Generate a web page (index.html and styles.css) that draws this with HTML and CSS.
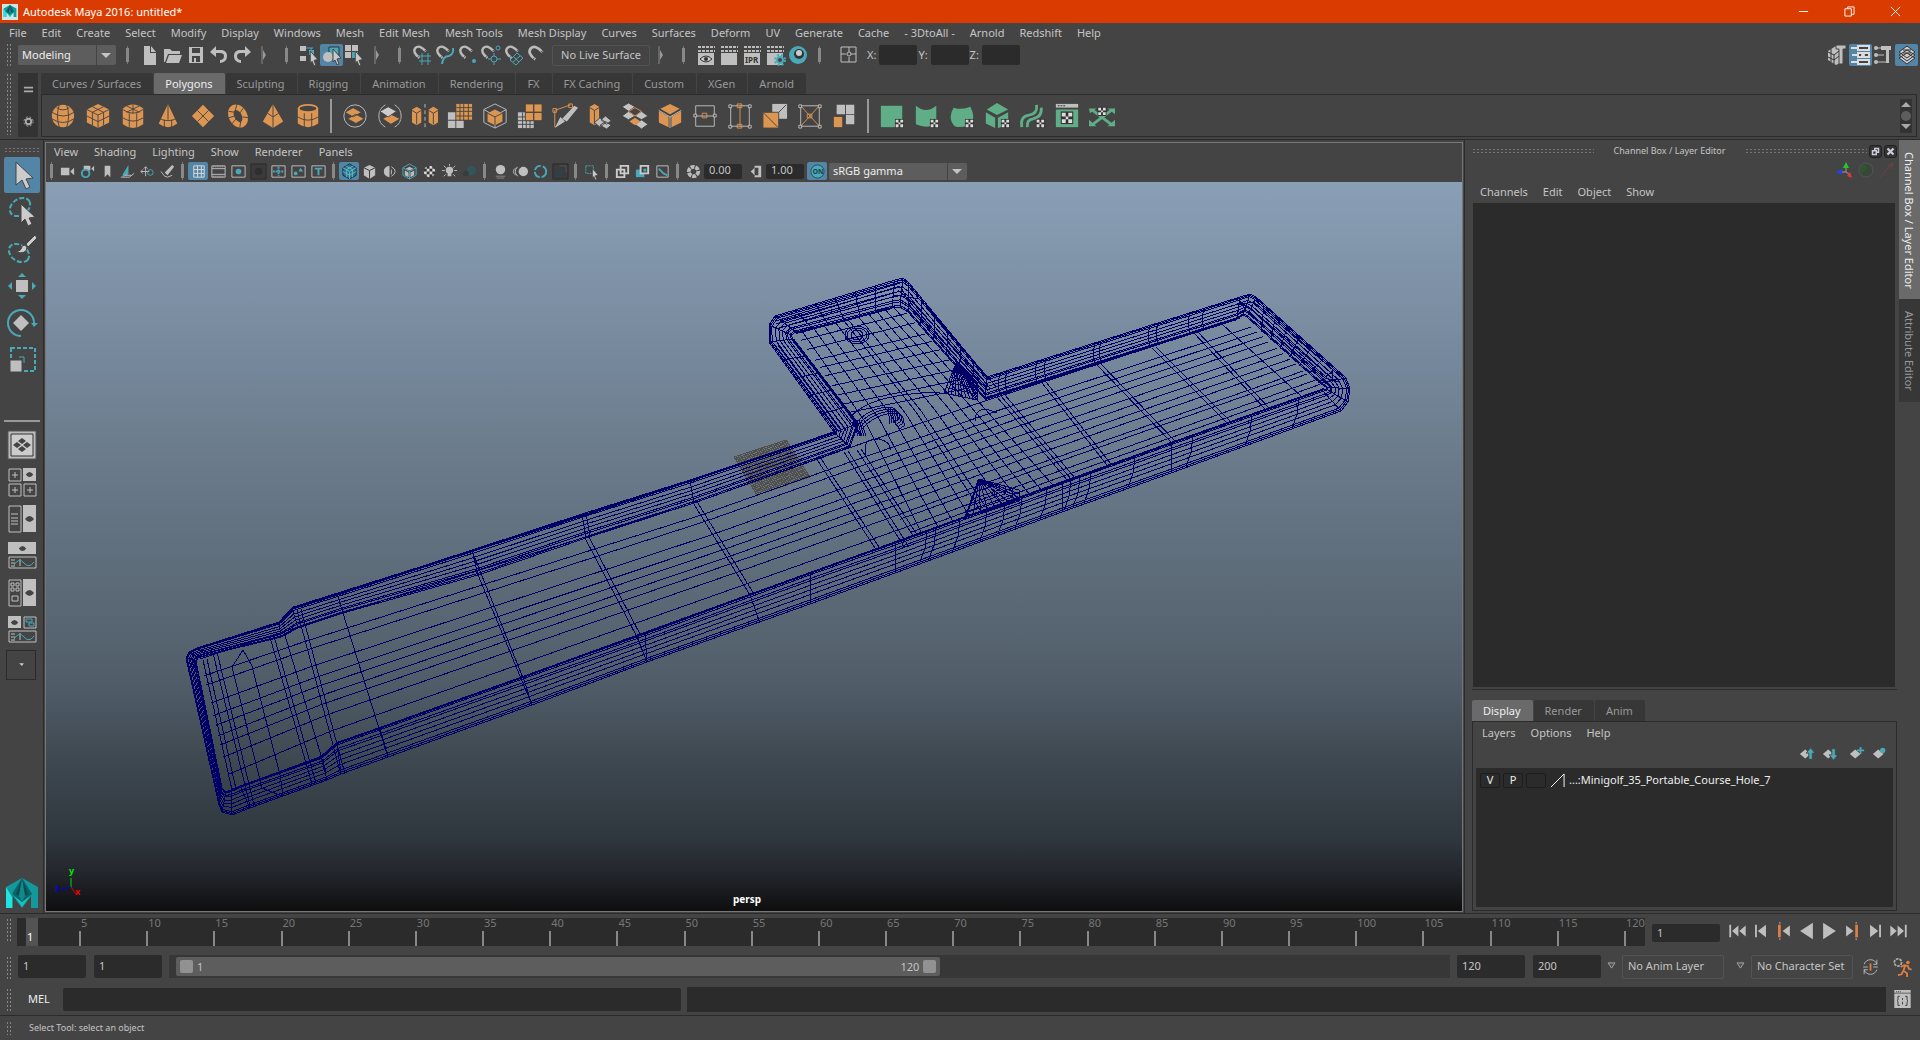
FILE: index.html
```html
<!DOCTYPE html>
<html lang="en">
<head>
<meta charset="utf-8">
<title>Autodesk Maya 2016: untitled*</title>
<link rel="stylesheet" href="styles.css">
</head>
<body>
<svg class="sprite" aria-hidden="true">
  <defs>
    <pattern id="check" width="6" height="6" patternUnits="userSpaceOnUse"><rect width="6" height="6" fill="#333"/><path d="M0 0h3v3h-3zM3 3h3v3h-3z" fill="#ddd"/></pattern>
  </defs>
  <!-- status line, 22 x 22 -->
  <symbol id="new" viewBox="0 0 22 22"><path class="l" d="M5 2h6v7h6v12H5z"/><path class="l" d="M12 2l5 6h-5z"/></symbol>
  <symbol id="open" viewBox="0 0 22 22"><path class="l" d="M2 5h6l2 2h8v3H6l-3 8H2z"/><path class="l" d="M7 11h13l-3 8H4z"/></symbol>
  <symbol id="save" viewBox="0 0 22 22"><path class="l" fill-rule="evenodd" d="M4 3h14v16H4zM7 4v5h8V4zM7 12v6h8v-6zM9 14h2v4H9z"/></symbol>
  <symbol id="undo" viewBox="0 0 22 22"><path class="l" d="M2 8l6-6v4h6q5 1 5 6 0 6-7 7v-3q4 0 4-4 0-3-4-3H8v4z"/></symbol>
  <symbol id="redo" viewBox="0 0 22 22"><path class="l" d="M20 8l-6-6v4H8q-5 1-5 6 0 6 7 7v-3q-4 0-4-4 0-3 4-3h4v4z"/></symbol>
  <symbol id="fold" viewBox="0 0 22 22"><path d="M8 2v18" stroke="#888"/><path fill="#999" d="M9 6l3 5-3 5z"/></symbol>
  <symbol id="cursor" viewBox="0 0 10 16"><path d="M1 0l8 9-4 1 2 5-2 1-2-5-2 2z" fill="#c8c8c8" stroke="#444"/></symbol>
  <symbol id="selh" viewBox="0 0 22 22"><path class="l" d="M2 2h6v5H2zM2 12h6v5H2z"/><path class="t" d="M8 4h7M13 4v5"/><path fill="#49a9b9" d="M11 6h5v5h-5z"/><use href="#cursor" x="11" y="7" width="10" height="15"/></symbol>
  <symbol id="selo" viewBox="0 0 22 22"><path fill="#49a9b9" stroke="#333" d="M8 3h10v9H8z"/><circle class="l" cx="7" cy="13" r="5"/><use href="#cursor" x="11" y="5" width="10" height="16"/></symbol>
  <symbol id="selc" viewBox="0 0 22 22"><path class="l" d="M1 1h6v6H1zM8 1h6v6H8zM1 8h6v6H1z"/><path fill="#49a9b9" d="M8 8h6v6H8z"/><use href="#cursor" x="10" y="7" width="10" height="15"/></symbol>
  <symbol id="mag" viewBox="0 0 22 22"><path d="M9 17Q0 10 4 5q5-5 13 4" fill="none" stroke="#bbb" stroke-width="3"/><path d="M8 15l-2 3M15 9l3-2" stroke="#444"/></symbol>
  <symbol id="m1" viewBox="0 0 22 22"><use href="#mag" width="20" height="18"/><path class="t" d="M8 12h12M8 17h12M11 9v12M17 9v12"/></symbol>
  <symbol id="m2" viewBox="0 0 22 22"><use href="#mag" width="20" height="18"/><path class="t" stroke-width="2" d="M8 20q1-8 7-8 5-2 4-8"/></symbol>
  <symbol id="m3" viewBox="0 0 22 22"><use href="#mag" width="20" height="18"/><circle cx="17" cy="17" r="2" fill="#49a9b9"/></symbol>
  <symbol id="m4" viewBox="0 0 22 22"><use href="#mag" width="18" height="18"/><circle class="t" cx="18" cy="4" r="2"/><circle class="t" cx="14" cy="15" r="3"/><path class="t" d="M14 9v3M14 18v3M8 15h3M17 15h4"/></symbol>
  <symbol id="m5" viewBox="0 0 22 22"><use href="#mag" width="20" height="18"/><path class="t" d="M14 9l6 5-7 7-6-5zM17 12l-7 6M11 13l5 5"/></symbol>
  <symbol id="m6" viewBox="0 0 22 22"><use href="#mag" x="1" width="20" height="20"/></symbol>
  <symbol id="clap" viewBox="0 0 22 22"><path class="l" d="M3 9h16v12H3z"/><path d="M3 3h17M3 7h17" stroke="#bbb" stroke-width="2" stroke-dasharray="3 1"/></symbol>
  <symbol id="r1" viewBox="0 0 22 22"><use href="#clap" width="22" height="22"/><path d="M5 15q6-6 12 0-6 6-12 0z" fill="#ccc" stroke="#333"/><circle cx="11" cy="15" r="2" fill="#333"/></symbol>
  <symbol id="r4" viewBox="0 0 22 22"><use href="#clap" width="22" height="22"/><circle cx="16" cy="16" r="3" fill="#444" stroke="#49a9b9" stroke-width="2"/><circle cx="16" cy="16" r="5" fill="none" stroke="#49a9b9" stroke-width="2" stroke-dasharray="2 2"/></symbol>
  <symbol id="r5" viewBox="0 0 22 22"><circle cx="11" cy="11" r="9" fill="#49a9b9"/><circle cx="12" cy="10" r="5" fill="#333"/><circle cx="12" cy="9" r="3" fill="#ccc"/></symbol>
  <symbol id="xyz" viewBox="0 0 22 22"><path class="o" d="M3 3h15v15H3zM3 10h5M13 10h5M11 3v5M11 13v5"/><circle class="o" cx="11" cy="10" r="2"/></symbol>
  <symbol id="p1" viewBox="0 0 22 22"><path class="l" d="M1 7l8-5 4 2v15l-4 2-8-5z"/><path class="d" d="M1 8l6 3v9M7 11l5-4M1 13l6 3 5-4M4 5v13"/><path class="l" stroke="#444" d="M9 1h10v4h-3v15h-4V5H9z"/></symbol>
  <symbol id="p2" viewBox="0 0 22 22"><path d="M1 4h7M2 11h7M1 18h7" stroke="#ddd" stroke-width="2"/><path fill="#444" stroke="#ddd" stroke-width="2" d="M8 2h11v4H8zM8 9h11v4H8zM8 16h11v4H8z"/><circle cx="13" cy="11" r="2" fill="#ddd"/></symbol>
  <symbol id="p3" viewBox="0 0 22 22"><path class="l" d="M8 2h10v4h-2v13h-3V6H8z"/><path class="o" d="M3 4h5M3 11h8M3 18h11"/><circle class="l" cx="3" cy="4" r="2"/><circle class="l" cx="3" cy="11" r="2"/><circle class="l" cx="3" cy="18" r="2"/></symbol>
  <symbol id="p4" viewBox="0 0 22 22"><path fill="#ccc" stroke="#333" d="M11 9l8 5-8 6-8-6zM11 6l8 5-8 6-8-6zM11 2l8 6-8 6-8-6z"/><path class="d" d="M7 6h8M7 9h8"/></symbol>

  <!-- shelf, 28 x 28 -->
  <symbol id="s1" viewBox="0 0 28 28"><circle class="g" cx="14" cy="14" r="12"/><path class="c" d="M2 10q12 8 24 0M2 17q12 8 24 0M10 2q-4 12 0 24M18 2q4 12 0 24M7 5q7 5 14 0"/></symbol>
  <symbol id="s2" viewBox="0 0 28 28"><path class="g" d="M14 1l12 6v14l-12 6L2 21V7z"/><path class="c" d="M2 7l12 6 12-6M14 13v14M8 4l12 6v14M20 4L8 10v14M2 14l12 6 12-6"/></symbol>
  <symbol id="s3" viewBox="0 0 28 28"><path class="g" d="M3 6q11-9 22 0v17q-11 8-22 0z"/><path class="c" d="M3 7q11 8 22 0M3 16q11 7 22 0M10 11v15M18 11v15M7 3l14 7M21 3L7 10M14 2v9"/></symbol>
  <symbol id="s4" viewBox="0 0 28 28"><path class="g" d="M14 1l10 21q-10 8-20 0z"/><path class="c" d="M14 1v17M5 17q9 4 18 0M10 18v8M18 18v8"/></symbol>
  <symbol id="s5" viewBox="0 0 28 28"><path class="g" d="M14 2l12 12-12 12L2 14z"/><path class="c" d="M8 8l12 12M20 8L8 20"/></symbol>
  <symbol id="s6" viewBox="0 0 28 28"><ellipse cx="14" cy="14" rx="7" ry="10" transform="rotate(-28 14 14)" fill="none" stroke="#dd9552" stroke-width="6"/><path class="c" d="M4 9l7 1M13 1l-2 7M20 5l-4 6M26 16l-7-1M16 26l1-7M7 23l5-6M4 16l6-2"/></symbol>
  <symbol id="s7" viewBox="0 0 28 28"><path class="g" d="M14 1l11 19-11 7-11-7z"/><path class="c" d="M14 1v26M8 11l6 4 6-4"/></symbol>
  <symbol id="s8" viewBox="0 0 28 28"><path class="g" d="M3 5v17q11 8 22 0V5z"/><ellipse cx="14" cy="6" rx="10" ry="4" fill="#444" stroke="#dd9552" stroke-width="2"/><path class="c" d="M3 15q11 7 22 0M10 11v15M18 11v15"/></symbol>
  <symbol id="s9" viewBox="0 0 28 28"><circle class="o" cx="14" cy="14" r="12"/><path class="g" stroke="#444" d="M15 12l9 5-9 5-9-5zM12 5l9 5-9 5-9-5z"/></symbol>
  <symbol id="s10" viewBox="0 0 28 28"><path class="o" d="M9 2Q2 6 2 14t7 12M19 2q7 4 7 12t-7 12"/><path class="g" stroke="#444" d="M15 12l10 5-10 6-9-6z"/><path fill="#ccc" stroke="#444" d="M12 4l9 5-9 6-9-6z"/></symbol>
  <symbol id="s11" viewBox="0 0 28 28"><path class="g" d="M0 7l5-3 5 3v14l-5 3-5-3zM18 7l5-3 5 3v14l-5 3-5-3z"/><path class="c" d="M0 8l5 3v12M5 11l5-3M18 8l5 3v12M23 11l5-3"/><path class="o" stroke-dasharray="4 3" d="M14 1v27"/></symbol>
  <symbol id="s12" viewBox="0 0 28 28"><path class="l" d="M1 10h8v8H1zM1 19h8v8H1zM10 19h8v8h-8z"/><path class="g" d="M10 1h17v17H10z"/><path class="c" d="M10 5h18M10 9h18M10 14h18M14 1v18M18 1v18M23 1v18"/></symbol>
  <symbol id="s13" viewBox="0 0 28 28"><path class="o" d="M14 1l12 6v14l-12 6L2 21V7zM2 7l12 7 12-7M14 14v13"/><path class="g" d="M14 7l8 4v9l-8 4-8-4v-9z"/><path class="c" d="M6 11l8 4 8-4M14 15v9"/></symbol>
  <symbol id="s14" viewBox="0 0 28 28"><path class="l" d="M1 10h17v17H1z"/><path class="c" d="M1 15h17M1 19h17M1 23h17M6 10v17M10 10v17M14 10v17"/><path class="g" stroke="#444" d="M9 1h9v9H9zM18 1h9v9h-9zM18 10h9v9h-9zM9 10h9v9H9z"/></symbol>
  <symbol id="s15" viewBox="0 0 28 28"><path d="M3 26V8l17-6" class="go"/><path fill="#444" class="go" d="M1 6h4v4H1zM18 1h4v4h-4z"/><path d="M3 27l6-12 5 5zM11 17L24 3l4 2-12 15z" class="l"/></symbol>
  <symbol id="s16" viewBox="0 0 28 28"><path class="g" d="M3 4l5-3 5 3v17l-5 3-5-3z"/><path class="c" d="M3 5l5 3v15M8 8l5-3"/><path class="l" stroke="#444" d="M14 16l6 5-6 5-6-5zM20 20l6 4-5 4-7-4zM20 14l6 5-5 4-6-5z"/></symbol>
  <symbol id="s17" viewBox="0 0 28 28"><path fill="#c4c4c4" stroke="#444" d="M7 0l7 4-7 5-7-5zM21 9l7 5-7 4-7-4zM21 18l7 5-7 5-7-5zM7 9l7 5-7 4-7-4z"/><path class="go" fill="#444" d="M14 5l7 4-7 5-7-5z"/><path class="g" d="M14 16l6 4-6 4-6-4z"/></symbol>
  <symbol id="s18" viewBox="0 0 28 28"><path class="g" d="M14 1l12 6v14l-12 6L2 21V7z"/><path d="M2 7l12 7 12-7M14 14v13" fill="none" stroke="#444" stroke-width="3"/><path class="o" d="M2 8l12 7 12-7M14 15v12"/></symbol>
  <symbol id="s19" viewBox="0 0 28 28"><path class="o" d="M4 3h20v22H4zM2 14h24"/><path class="oo" d="M2 12h3v3H2zM23 12h3v3h-3z"/><path class="go" fill="#444" d="M11 11h5v5h-5z"/></symbol>
  <symbol id="s20" viewBox="0 0 28 28"><path class="o" d="M4 3h20v22H4z"/><path class="oo" d="M2 2h3v3H2zM23 2h3v3h-3zM2 24h3v3H2zM23 24h3v3h-3z"/><path class="go" d="M14 3v22"/><path class="go" fill="#444" d="M11 1h5v4h-5zM11 23h5v4h-5z"/></symbol>
  <symbol id="s21" viewBox="0 0 28 28"><path class="l" d="M11 1h16v16H11z"/><path class="c" d="M13 15L26 2"/><path class="g" stroke="#444" d="M1 10h17v17H1z"/><path class="c" d="M2 11l15 15"/></symbol>
  <symbol id="s22" viewBox="0 0 28 28"><path class="o" d="M4 3h20v22H4z"/><path class="go" d="M4 3l20 22M24 3L4 25"/><path class="oo" d="M2 2h3v3H2zM23 2h3v3h-3zM2 24h3v3H2zM23 24h3v3h-3z"/><path class="go" fill="#444" d="M11 12h5v4h-5z"/></symbol>
  <symbol id="s23" viewBox="0 0 28 28"><path class="l" d="M5 2h9v10H5zM15 2h9v10h-9zM15 13h9v10h-9z"/><path class="g" d="M2 15h9v11H2z"/></symbol>
  <symbol id="ck" viewBox="0 0 10 10"><path d="M0 0h10v10H0z" fill="#333"/><path d="M1 1h3v3H1zM6 1h3v3H6zM4 4h2v2H4zM1 6h3v3H1zM6 6h3v3H6z" fill="#ddd"/></symbol>
  <symbol id="u1" viewBox="0 0 28 28"><path class="u" d="M2 3h23v23H2z"/><use href="#ck" x="17" y="17" width="10" height="10"/></symbol>
  <symbol id="u2" viewBox="0 0 28 28"><path class="u" d="M2 3q11 9 22 0v18q-8 8-22 2z"/><use href="#ck" x="17" y="17" width="10" height="10"/></symbol>
  <symbol id="u3" viewBox="0 0 28 28"><path class="u" d="M5 5q9 3 18-1 5 9 2 17-8 7-19 4Q-2 16 5 5z"/><use href="#ck" x="17" y="17" width="10" height="10"/></symbol>
  <symbol id="u4" viewBox="0 0 28 28"><path class="u" d="M14 0l12 7-12 6L3 7zM2 10l10 6v11L2 22zM15 16l11-6v14l-11 3z"/><use href="#ck" x="18" y="17" width="10" height="10"/></symbol>
  <symbol id="u5" viewBox="0 0 28 28"><path d="M3 26q-2-12 8-13 9-1 8-11M9 26q-1-8 6-9 10-2 9-12" fill="none" stroke="#5fae88" stroke-width="3"/><use href="#ck" x="18" y="17" width="10" height="10"/></symbol>
  <symbol id="u6" viewBox="0 0 28 28"><path class="l" d="M2 1h24v4H2z"/><path class="d" d="M4 3h8" stroke-dasharray="2 1"/><path class="u" d="M2 7h24v19H2z"/><use href="#ck" x="7" y="9" width="14" height="14"/></symbol>
  <symbol id="u7" viewBox="0 0 28 28"><path d="M4 8l20 15M24 8L4 23" stroke="#5fae88" stroke-width="3"/><path class="u" d="M0 6h8l-7 5zM20 6h8v6zM0 25v-7l8 7zM28 25v-7l-8 7z"/><use href="#ck" x="9" y="4" width="10" height="10"/></symbol>

  <!-- panel bar, 18 x 18 -->
  <symbol id="v1" viewBox="0 0 18 18"><path class="l" d="M2 5h9v8H2zM12 9l4-4v8z"/></symbol>
  <symbol id="v2" viewBox="0 0 18 18"><path class="l" d="M5 3h7v5H5zM13 6l3-3v6z"/><circle cx="7" cy="11" r="4" fill="#444" stroke="#49a9b9" stroke-width="2"/></symbol>
  <symbol id="v3" viewBox="0 0 18 18"><path class="l" d="M6 3h6v12l-3-3-3 3z"/></symbol>
  <symbol id="v4" viewBox="0 0 18 18"><path fill="#49a9b9" d="M4 12l6-10v10l-6 3z"/><path class="o" d="M2 15h9l5-4M6 13h7"/></symbol>
  <symbol id="v5" viewBox="0 0 18 18"><path class="o" d="M2 9h9M7 4v10M2 9l2-2M2 9l2 2M7 4l-2 2M7 4l2 2"/><circle class="t" cx="12" cy="10" r="3"/></symbol>
  <symbol id="v6" viewBox="0 0 18 18"><path class="l" d="M6 10L14 2l2 2-7 9z"/><path class="o" d="M2 9l4 5 3 1 5-2"/></symbol>
  <symbol id="v7" viewBox="0 0 18 18"><path d="M4 3h11v12H4zM4 7h11M4 11h11M8 3v12M12 3v12" fill="none" stroke="#ddd"/></symbol>
  <symbol id="v8" viewBox="0 0 18 18"><path class="o" d="M2 3h14v12H2zM2 6h14M2 12h14"/><path d="M3 4h12M3 14h12" stroke="#ccc" stroke-dasharray="1 1"/></symbol>
  <symbol id="v9" viewBox="0 0 18 18"><path class="o" d="M2 3h14v12H2z"/><circle cx="9" cy="9" r="3" fill="#49a9b9"/></symbol>
  <symbol id="v10" viewBox="0 0 18 18"><path d="M1 1h16v16H1z" fill="#3b3b3b" stroke="#2b2b2b"/><circle cx="9" cy="9" r="4" fill="#2f2f2f"/></symbol>
  <symbol id="v11" viewBox="0 0 18 18"><path class="o" d="M2 3h14v12H2z"/><path class="t" stroke-width="2" d="M3 9h12M9 4v10" stroke-dasharray="2 1"/></symbol>
  <symbol id="v12" viewBox="0 0 18 18"><path class="o" d="M2 3h14v12H2z"/><circle cx="6" cy="11" r="2" fill="#49a9b9"/><path fill="#49a9b9" d="M9 9l2-4 3 4z"/></symbol>
  <symbol id="v13" viewBox="0 0 18 18"><path class="o" d="M2 3h14v12H2z"/><path class="t" stroke-width="2" d="M5 6h8M9 6v7"/></symbol>
  <symbol id="v14" viewBox="0 0 18 18"><path fill="#326f86" stroke="#12323e" d="M9 1l7 4v8l-7 4-7-4V5z"/><path fill="none" stroke="#5cc0cf" d="M2 5l7 4 7-4M9 9v8M5 3l7 4v8M13 3L6 7v8M2 9l7 4 7-4"/></symbol>
  <symbol id="v15" viewBox="0 0 18 18"><path class="l" d="M9 2l6 3v8l-6 4-6-4V5z"/><path class="d" d="M3 5l6 3 6-3M9 8v9"/></symbol>
  <symbol id="v16" viewBox="0 0 18 18"><path class="l" d="M9 3v12q-6-1-6-6t6-6z"/><path class="o" d="M11 4q4 2 4 5t-4 5M11 7v5"/></symbol>
  <symbol id="v17" viewBox="0 0 18 18"><path class="t" d="M9 1l7 4v8l-7 4-7-4V5zM2 5l7 4 7-4M9 9v8"/><path d="M9 4l4 2-4 2-4-2zM4 8l4 2v5l-4-2zM14 8l-4 2v5l4-2z" fill="#bbb"/></symbol>
  <symbol id="v18" viewBox="0 0 18 18"><circle cx="9" cy="9" r="6" fill="url(#check)"/></symbol>
  <symbol id="v19" viewBox="0 0 18 18"><path class="l" d="M9 4q4 0 4 4 0 2-2 3v3H7v-3q-2-1-2-3 0-4 4-4z"/><path class="o" d="M9 1v2M1 8h3M14 8h3M3 3l2 2M15 3l-2 2M3 14l2-2M15 14l-2-2"/></symbol>
  <symbol id="v20" viewBox="0 0 18 18"><circle cx="11" cy="8" r="5" fill="#31555b"/><circle cx="5" cy="11" r="3" fill="#3b3b3b"/></symbol>
  <symbol id="v21" viewBox="0 0 18 18"><circle class="l" cx="9" cy="7" r="5"/><path d="M4 14h10M5 16h8" stroke="#888"/></symbol>
  <symbol id="v22" viewBox="0 0 18 18"><circle class="l" cx="12" cy="9" r="5"/><path class="o" d="M6 4Q1 9 6 14M4 5Q-1 9 4 13"/></symbol>
  <symbol id="v23" viewBox="0 0 18 18"><circle cx="9" cy="9" r="6" fill="none" stroke="#49a9b9" stroke-width="2" stroke-dasharray="8 2"/></symbol>
  <symbol id="v24" viewBox="0 0 18 18"><path d="M1 1h16v16H1z" fill="#3b3b3b" stroke="#2b2b2b"/><path d="M4 7h8v8H4z" fill="#2f4145"/><path d="M8 3h7v7" fill="none" stroke="#555"/></symbol>
  <symbol id="v25" viewBox="0 0 18 18"><path class="t" stroke-dasharray="2 1" d="M3 3h8v8H3z"/><use href="#cursor" x="9" y="6" width="8" height="12"/></symbol>
  <symbol id="v26" viewBox="0 0 18 18"><path fill="#444" stroke="#ccc" stroke-width="2" d="M7 3h8v8H7zM3 7h8v8H3z"/></symbol>
  <symbol id="v27" viewBox="0 0 18 18"><path fill="#49a9b9" d="M2 7h9v8H2z"/><path fill="#444" stroke="#ccc" stroke-width="2" d="M7 3h8v8H7z"/><path fill="#49a9b9" d="M10 6h3v3h-3z"/></symbol>
  <symbol id="v28" viewBox="0 0 18 18"><path class="o" d="M3 3h12v12H3z"/><path class="t" stroke-width="2" d="M5 6l5 5 4 2"/></symbol>
  <symbol id="v29" viewBox="0 0 18 18"><circle cx="9" cy="9" r="5" fill="none" stroke="#bbb" stroke-width="4" stroke-dasharray="4 1"/></symbol>
  <symbol id="v30" viewBox="0 0 18 18"><path class="l" d="M8 3h7v12H8v-2h4V5H8z"/><path class="l" d="M4 9l4-4v8z"/></symbol>

  <!-- toolbox, 36 x 34 -->
  <symbol id="t1" viewBox="0 0 36 34"><path fill="#ccc" stroke="#444" d="M12 4l17 16-7 1 4 8-4 2-4-9-6 5z"/></symbol>
  <symbol id="t2" viewBox="0 0 36 34"><ellipse cx="16" cy="12" rx="11" ry="8" transform="rotate(-35 16 12)" fill="none" stroke="#49a9b9" stroke-width="2" stroke-dasharray="5 2"/><path fill="#ccc" stroke="#444" d="M17 9l14 13-6 1 3 6-4 2-3-7-4 4z"/></symbol>
  <symbol id="t3" viewBox="0 0 36 34"><ellipse cx="15" cy="21" rx="11" ry="8" transform="rotate(35 15 21)" fill="none" stroke="#49a9b9" stroke-width="2" stroke-dasharray="5 2"/><path fill="#ccc" stroke="#444" d="M11 20q7-1 7-6 3-2 5 1 0 8-12 5zM22 12L31 3l2 3-9 9z"/></symbol>
  <symbol id="t4" viewBox="0 0 36 34"><path class="l" d="M12 11h12v12H12z"/><path fill="#49a9b9" d="M14 8l4-4 4 4zM14 26l4 4 4-4zM8 13l-4 4 4 4zM28 13l4 4-4 4z"/></symbol>
  <symbol id="t5" viewBox="0 0 36 34"><path class="l" d="M17 9l8 8-8 8-8-8z"/><path class="t" stroke-width="2" d="M17 30A13 13 0 1 1 30 17"/><path fill="#49a9b9" d="M27 17h7l-4 4z"/></symbol>
  <symbol id="t6" viewBox="0 0 36 34"><path class="t" stroke-width="2" stroke-dasharray="4 2" d="M7 5h24v23H7z"/><path class="l" stroke="#444" d="M6 17h12v12H6z"/><path class="t" d="M15 14h5v6"/></symbol>
  <symbol id="eye" viewBox="0 0 12 8"><path d="M0 4q3-4 6-4t6 4q-3 4-6 4T0 4z" fill="#444"/></symbol>
  <symbol id="y1" viewBox="0 0 30 30"><path fill="#bbb" stroke="#555" d="M1 1h28v28H1z"/><path fill="#ccc" stroke="#333" d="M4 4h22v22H4z"/><path fill="#444" d="M11 11l4-3 4 3-4 3zM11 19l4-3 4 3-4 3zM6 15l4-3 4 3-4 3zM16 15l4-3 4 3-4 3z"/></symbol>
  <symbol id="y2" viewBox="0 0 30 30"><path class="o" d="M2 2h12v12H2zM2 17h12v12H2zM17 17h12v12H17zM5 8h6M8 5v6M5 23h6M8 20v6M20 23h6M23 20v6"/><path class="l" d="M16 1h13v13H16z"/><use href="#eye" x="18" y="5" width="9" height="5"/></symbol>
  <symbol id="y3" viewBox="0 0 30 30"><path class="o" d="M2 2h12v26H2zM4 10h7M4 14h7M4 17h7M4 20h7"/><path class="l" d="M16 1h13v27H16z"/><use href="#eye" x="18" y="12" width="9" height="6"/></symbol>
  <symbol id="y4" viewBox="0 0 30 30"><path class="l" d="M1 1h28v12H1z"/><use href="#eye" x="11" y="5" width="9" height="5"/><path class="o" d="M2 16h27v11H2zM4 19h4M4 22h4M4 25h4M13 18v7"/><path class="t" d="M7 24q5-8 10-2t10-1"/></symbol>
  <symbol id="y5" viewBox="0 0 30 30"><path class="o" d="M2 2h12v26H2zM4 5h3v3H4zM9 5h3v3H9zM4 10h3v3H4zM9 10h3v3H9zM5 18h6v5H5z"/><path class="l" d="M16 1h13v27H16z"/><use href="#eye" x="18" y="12" width="9" height="6"/></symbol>
  <symbol id="y6" viewBox="0 0 30 30"><path class="l" d="M1 1h13v12H1z"/><use href="#eye" x="3" y="5" width="9" height="5"/><path class="o" d="M17 2h12v11H17zM2 16h27v11H2zM4 19h4M4 22h4M4 25h4M13 18v7"/><path class="t" d="M19 4h6v3h-6zM22 8h5v3h-5zM7 24q5-8 10-2t10-1"/></symbol>
  <symbol id="maya" viewBox="0 0 32 30"><path fill="#13989c" d="M0 9L16 0l16 9v21h-7V18l-9 12-9-12v12H0z"/><path fill="#20e4e0" d="M0 9l6 10v11H0z"/><path fill="#10c4c4" d="M8 18l8 11 8-11-8 6z"/><path fill="#0b6468" d="M16 0L6 16l10 8 10-8z"/><path fill="#128a8c" d="M16 0l-4 17 4 6 4-6z"/><path fill="#0a4d52" d="M16 0l-6 16 3 2zM16 0l6 16-3 2z"/></symbol>

  <!-- playback, 20 x 22 -->
  <symbol id="b1" viewBox="0 0 20 22"><path class="l" d="M1 4h2v14H1zM11 5v12l-7-6zM19 5v12l-7-6z"/></symbol>
  <symbol id="b2" viewBox="0 0 20 22"><path class="l" d="M4 4h2v14H4zM16 4v14l-9-7z"/></symbol>
  <symbol id="b3" viewBox="0 0 20 22"><path class="l" d="M17 5v12l-8-6z"/><path fill="#dd7f43" d="M4 4h3v14H4z"/><path class="o" d="M6 1v2M6 19v2"/></symbol>
  <symbol id="b4" viewBox="0 0 20 22"><path class="l" d="M17 2v18L3 11z"/></symbol>
  <symbol id="exp" viewBox="0 0 20 22"><path class="l" d="M1 1h18v3H1zM1 5h18v16H1z"/><path class="d" d="M3 3h5" stroke-dasharray="1 1"/><path class="d" d="M7 8H5v4l-1 1 1 1v4h2M13 8h2v4l1 1-1 1v4h-2M10 10v2M10 14v3"/></symbol>
  <symbol id="key" viewBox="0 0 20 22"><path class="o" d="M3 8Q5 3 10 3t7 5M17 14q-2 5-7 5t-7-5M17 3v5h-4M3 19v-5h4M2 11h5M13 11h5"/><path fill="#dd7f43" d="M9 7h2v8H9z"/></symbol>
  <symbol id="run" viewBox="0 0 20 22"><circle cx="5" cy="6" r="4" fill="none" stroke="#aaa" stroke-width="2" stroke-dasharray="3 1"/><circle cx="16" cy="6" r="2" fill="#dd7f43"/><path d="M8 11l4-2 4 1 1 3 3 1M13 9l-2 6 4 3v4M11 15l-2 4-4 1" fill="none" stroke="#dd7f43" stroke-width="2"/></symbol>
  <symbol id="l1" viewBox="0 0 20 18"><path class="l" d="M2 9l6-5 6 5-6 5z"/></symbol>
</svg>

<header class="titlebar">
  <svg class="appicon" viewBox="0 0 16 16"><path fill="#cfe6e6" d="M0 0h16v16H0z"/><use href="#maya" x="1" y="1" width="14" height="12"/></svg>
  <h1>Autodesk Maya 2016: untitled*</h1>
  <button aria-label="Minimize"><svg viewBox="0 0 12 12"><path class="w" d="M1 6h10"/></svg></button>
  <button aria-label="Restore"><svg viewBox="0 0 12 12"><path class="w" d="M1 3h7v8H1zM4 3V1h7v8H8"/></svg></button>
  <button aria-label="Close"><svg viewBox="0 0 12 12"><path class="w" d="M1 1l10 10M11 1L1 11"/></svg></button>
</header>

<nav class="menus mainmenu">
  <button>File</button><button>Edit</button><button>Create</button><button>Select</button><button>Modify</button><button>Display</button><button>Windows</button><button>Mesh</button><button>Edit Mesh</button><button>Mesh Tools</button><button>Mesh Display</button><button>Curves</button><button>Surfaces</button><button>Deform</button><button>UV</button><button>Generate</button><button>Cache</button><button>- 3DtoAll -</button><button>Arnold</button><button>Redshift</button><button>Help</button>
</nav>

<div class="statusline">
  <i class="grip"></i>
  <span class="drop mode"><select aria-label="Menu set"><option>Modeling</option></select></span>
  <i class="bar"></i>
  <button aria-label="New scene"><svg><use href="#new"/></svg></button>
  <button aria-label="Open scene"><svg><use href="#open"/></svg></button>
  <button aria-label="Save scene"><svg><use href="#save"/></svg></button>
  <button aria-label="Undo"><svg><use href="#undo"/></svg></button>
  <button aria-label="Redo"><svg><use href="#redo"/></svg></button>
  <button aria-label="Collapse"><svg><use href="#fold"/></svg></button>
  <i class="bar"></i>
  <button aria-label="Select by hierarchy"><svg><use href="#selh"/></svg></button>
  <button aria-label="Select by object" class="on"><svg><use href="#selo"/></svg></button>
  <button aria-label="Select by component"><svg><use href="#selc"/></svg></button>
  <button aria-label="Collapse"><svg><use href="#fold"/></svg></button>
  <i class="bar"></i>
  <button aria-label="Snap to grids"><svg><use href="#m1"/></svg></button>
  <button aria-label="Snap to curves"><svg><use href="#m2"/></svg></button>
  <button aria-label="Snap to points"><svg><use href="#m3"/></svg></button>
  <button aria-label="Snap to center"><svg><use href="#m4"/></svg></button>
  <button aria-label="Snap to planes"><svg><use href="#m5"/></svg></button>
  <button aria-label="Make live"><svg><use href="#m6"/></svg></button>
  <button class="framed live">No Live Surface</button>
  <button aria-label="Collapse"><svg><use href="#fold"/></svg></button>
  <i class="bar"></i>
  <button aria-label="Render view"><svg><use href="#r1"/></svg></button>
  <button aria-label="Render frame"><svg><use href="#clap"/></svg></button>
  <button aria-label="IPR render"><svg viewBox="0 0 22 22"><use href="#clap" width="22" height="22"/><text x="4" y="19" class="ipr">IPR</text></svg></button>
  <button aria-label="Render settings"><svg><use href="#r4"/></svg></button>
  <button aria-label="Hypershade"><svg><use href="#r5"/></svg></button>
  <i class="bar"></i>
  <button aria-label="Input mode" class="inputmode"><svg><use href="#xyz"/></svg></button>
  <label>X:<input></label><label>Y:<input></label><label>Z:<input></label>
  <span class="fill"></span>
  <button aria-label="Modeling toolkit"><svg><use href="#p1"/></svg></button>
  <button aria-label="Attribute editor" class="on"><svg><use href="#p2"/></svg></button>
  <button aria-label="Tool settings"><svg><use href="#p3"/></svg></button>
  <button aria-label="Channel box" class="on"><svg><use href="#p4"/></svg></button>
</div>

<section class="shelf">
  <i class="grip"></i>
  <div class="shelfctl">
    <button aria-label="Shelf tabs"><svg viewBox="0 0 12 12"><path d="M1 4h10M1 8h10" stroke="#aaa" stroke-width="2"/></svg></button>
    <button aria-label="Shelf options"><svg viewBox="0 0 12 12"><circle cx="6" cy="6" r="3" fill="none" stroke="#aaa" stroke-width="2"/><circle cx="6" cy="6" r="5" fill="none" stroke="#aaa" stroke-dasharray="2 2"/></svg></button>
  </div>
  <div class="shelfmain">
    <div class="tabs">
      <button>Curves / Surfaces</button><button class="cur">Polygons</button><button>Sculpting</button><button>Rigging</button><button>Animation</button><button>Rendering</button><button>FX</button><button>FX Caching</button><button>Custom</button><button>XGen</button><button>Arnold</button>
    </div>
    <div class="tools">
      <button aria-label="Sphere"><svg><use href="#s1"/></svg></button><button aria-label="Cube"><svg><use href="#s2"/></svg></button><button aria-label="Cylinder"><svg><use href="#s3"/></svg></button><button aria-label="Cone"><svg><use href="#s4"/></svg></button><button aria-label="Plane"><svg><use href="#s5"/></svg></button><button aria-label="Torus"><svg><use href="#s6"/></svg></button><button aria-label="Pyramid"><svg><use href="#s7"/></svg></button><button aria-label="Pipe"><svg><use href="#s8"/></svg></button>
      <i class="sep"></i>
      <button aria-label="Combine"><svg><use href="#s9"/></svg></button><button aria-label="Separate"><svg><use href="#s10"/></svg></button><button aria-label="Mirror"><svg><use href="#s11"/></svg></button><button aria-label="Smooth"><svg><use href="#s12"/></svg></button><button aria-label="Proxy"><svg><use href="#s13"/></svg></button><button aria-label="Reduce"><svg><use href="#s14"/></svg></button><button aria-label="Create polygon"><svg><use href="#s15"/></svg></button><button aria-label="Extrude"><svg><use href="#s16"/></svg></button><button aria-label="Bridge"><svg><use href="#s17"/></svg></button><button aria-label="Bevel"><svg><use href="#s18"/></svg></button><button aria-label="Multi-cut"><svg><use href="#s19"/></svg></button><button aria-label="Edge loop"><svg><use href="#s20"/></svg></button><button aria-label="Quadrangulate"><svg><use href="#s21"/></svg></button><button aria-label="Merge"><svg><use href="#s22"/></svg></button><button aria-label="Collapse"><svg><use href="#s23"/></svg></button>
      <i class="sep"></i>
      <button aria-label="Planar map"><svg><use href="#u1"/></svg></button><button aria-label="Cylindrical map"><svg><use href="#u2"/></svg></button><button aria-label="Spherical map"><svg><use href="#u3"/></svg></button><button aria-label="Automatic map"><svg><use href="#u4"/></svg></button><button aria-label="Contour stretch"><svg><use href="#u5"/></svg></button><button aria-label="UV editor"><svg><use href="#u6"/></svg></button><button aria-label="Unfold"><svg><use href="#u7"/></svg></button>
      <span class="fill"></span>
      <svg class="shelfscroll" viewBox="0 0 12 34"><path fill="#333" d="M0 0h12v34H0z"/><path fill="#aaa" d="M1 8l5-5 5 5zM1 25h10l-5 5z"/><circle cx="6" cy="17" r="5" fill="#5d5d5d"/></svg>
    </div>
  </div>
</section>

<main class="work">
  <aside class="toolbox">
    <i class="hgrip"></i>
    <button class="on" aria-label="Select"><svg><use href="#t1"/></svg></button>
    <button aria-label="Lasso"><svg><use href="#t2"/></svg></button>
    <button aria-label="Paint select"><svg><use href="#t3"/></svg></button>
    <button aria-label="Move"><svg><use href="#t4"/></svg></button>
    <button aria-label="Rotate"><svg><use href="#t5"/></svg></button>
    <button aria-label="Scale"><svg><use href="#t6"/></svg></button>
    <div class="layouts">
      <button aria-label="Single view"><svg><use href="#y1"/></svg></button>
      <button aria-label="Four view"><svg><use href="#y2"/></svg></button>
      <button aria-label="Outliner"><svg><use href="#y3"/></svg></button>
      <button aria-label="Graph editor"><svg><use href="#y4"/></svg></button>
      <button aria-label="Hypershade view"><svg><use href="#y5"/></svg></button>
      <button aria-label="Hypergraph"><svg><use href="#y6"/></svg></button>
      <button class="more" aria-label="More layouts"><svg viewBox="0 0 30 28"><path fill="#ccc" d="M13 12h5l-2 3z"/></svg></button>
    </div>
    <svg class="logo"><use href="#maya"/></svg>
  </aside>

  <section class="panel">
    <nav class="menus panelmenu"><button>View</button><button>Shading</button><button>Lighting</button><button>Show</button><button>Renderer</button><button>Panels</button></nav>
    <div class="panelbar">
      <i class="bar"></i>
      <button aria-label="Select camera"><svg><use href="#v1"/></svg></button><button aria-label="Camera attributes"><svg><use href="#v2"/></svg></button><button aria-label="Bookmarks"><svg><use href="#v3"/></svg></button><button aria-label="Image plane"><svg><use href="#v4"/></svg></button><button aria-label="Pan zoom"><svg><use href="#v5"/></svg></button><button aria-label="Grease pencil"><svg><use href="#v6"/></svg></button>
      <i class="bar"></i>
      <button class="on" aria-label="Grid"><svg><use href="#v7"/></svg></button><button aria-label="Film gate"><svg><use href="#v8"/></svg></button><button aria-label="Resolution gate"><svg><use href="#v9"/></svg></button><button aria-label="Gate mask"><svg><use href="#v10"/></svg></button><button aria-label="Field chart"><svg><use href="#v11"/></svg></button><button aria-label="Safe action"><svg><use href="#v12"/></svg></button><button aria-label="Safe title"><svg><use href="#v13"/></svg></button>
      <i class="bar"></i>
      <button class="on" aria-label="Wireframe"><svg><use href="#v14"/></svg></button><button aria-label="Shaded"><svg><use href="#v15"/></svg></button><button aria-label="Default material"><svg><use href="#v16"/></svg></button><button aria-label="Wireframe on shaded"><svg><use href="#v17"/></svg></button><button aria-label="Textured"><svg><use href="#v18"/></svg></button><button aria-label="Lights"><svg><use href="#v19"/></svg></button><button aria-label="Shadows"><svg><use href="#v20"/></svg></button>
      <i class="bar"></i>
      <button aria-label="Occlusion"><svg><use href="#v21"/></svg></button><button aria-label="Motion blur"><svg><use href="#v22"/></svg></button><button aria-label="Anti-aliasing"><svg><use href="#v23"/></svg></button><button aria-label="Depth of field"><svg><use href="#v24"/></svg></button>
      <i class="bar"></i>
      <button aria-label="Isolate select"><svg><use href="#v25"/></svg></button>
      <i class="bar"></i>
      <button aria-label="X-ray"><svg><use href="#v26"/></svg></button><button aria-label="X-ray joints"><svg><use href="#v27"/></svg></button><button aria-label="X-ray active"><svg><use href="#v28"/></svg></button>
      <i class="bar"></i>
      <button aria-label="Exposure"><svg><use href="#v29"/></svg></button>
      <input aria-label="Exposure value" value="0.00">
      <button aria-label="Gamma"><svg><use href="#v30"/></svg></button>
      <input aria-label="Gamma value" value="1.00">
      <button class="on cm" aria-label="Color management"><svg viewBox="0 0 18 18"><circle cx="9" cy="9" r="7" fill="#49a9b9" stroke="#2b4a55"/><text x="4" y="12" class="onlabel">ON</text></svg></button>
      <span class="drop gamma"><select aria-label="View transform"><option>sRGB gamma</option></select></span>
    </div>
    <div class="view">
      <svg id="scene" viewBox="46 182 1416 729" preserveAspectRatio="xMidYMid meet">
        <g id="grid" class="grid"></g>
        <g id="mesh" class="mesh"></g>
        <g class="axis">
          <path d="M71 878v9" stroke="#0d0"/><path d="M71 887l5 7" stroke="#d00"/><path d="M71 887l-11 3" stroke="#00d"/>
          <text x="69" y="874" fill="#0e0">y</text><text x="75" y="895" fill="#e00">x</text><text x="55" y="891" fill="#00e">z</text>
        </g>
      </svg>
      <span class="camera">persp</span>
    </div>
  </section>

  <aside class="side">
    <div class="sidehead"><i class="hgrip"></i><h2>Channel Box / Layer Editor</h2><i class="hgrip"></i>
      <button aria-label="Float"><svg viewBox="0 0 12 12"><path d="M2 5h5v5H2zM5 4V2h5v5H8" fill="none" stroke="#ccd" stroke-width="2"/></svg></button><button aria-label="Close panel"><svg viewBox="0 0 12 12"><path d="M2 2l8 8M10 2l-8 8" stroke="#ccd" stroke-width="3"/></svg></button></div>
    <div class="manips">
      <svg viewBox="0 0 60 17"><path d="M10 10V4M10 10H4M10 10l4 3" stroke="#999"/><path fill="#2c2" d="M10 0l3 6H7z"/><path fill="#24d" d="M0 10l6-3v6z"/><path fill="#e33" d="M16 16l-5-2 3-4z"/><circle cx="30" cy="8" r="7" fill="#3b463b" stroke="#555"/><path fill="#305530" d="M30 8V3a5 5 0 0 0-4 9z"/><path d="M44 15L57 1m0 0l-5 3m5-3l-2 6" stroke="#704040" fill="none"/></svg>
    </div>
    <nav class="menus chmenu"><button>Channels</button><button>Edit</button><button>Object</button><button>Show</button></nav>
    <div class="channels"></div>
    <div class="tabs layertabs"><button class="cur">Display</button><button>Render</button><button>Anim</button></div>
    <div class="layers">
      <nav class="menus"><button>Layers</button><button>Options</button><button>Help</button></nav>
      <div class="layertools">
        <button aria-label="Move up"><svg viewBox="0 0 20 18"><use href="#l1"/><path fill="#49a9b9" stroke="#444" d="M12 15V8H9l5-6 5 6h-3v7z"/></svg></button>
        <button aria-label="Move down"><svg viewBox="0 0 20 18"><use href="#l1"/><path fill="#49a9b9" stroke="#444" d="M12 3v7H9l5 6 5-6h-3V3z"/></svg></button>
        <button aria-label="New layer" class="gap"><svg viewBox="0 0 20 18"><use href="#l1"/><path d="M14 1v8M10 5h8" stroke="#49a9b9" stroke-width="2"/></svg></button>
        <button aria-label="New layer from selected"><svg viewBox="0 0 20 18"><use href="#l1"/><circle cx="13" cy="5" r="3" fill="#49a9b9"/></svg></button>
      </div>
      <div class="layerlist">
        <div class="layer"><button>V</button><button>P</button><button aria-label="Display type"></button><svg viewBox="0 0 16 16"><path class="w" d="M1 15L15 1v14"/></svg><span>...:Minigolf_35_Portable_Course_Hole_7</span></div>
      </div>
    </div>
  </aside>
  <div class="vtabs"><button class="cur">Channel Box / Layer Editor</button><button>Attribute Editor</button></div>
</main>

<section class="time">
  <i class="grip"></i>
  <div class="ruler"><b class="now">1</b>
    <ol><li>5</li><li>10</li><li>15</li><li>20</li><li>25</li><li>30</li><li>35</li><li>40</li><li>45</li><li>50</li><li>55</li><li>60</li><li>65</li><li>70</li><li>75</li><li>80</li><li>85</li><li>90</li><li>95</li><li>100</li><li>105</li><li>110</li><li>115</li><li>120</li></ol>
  </div>
  <input aria-label="Current time" value="1">
  <div class="play">
    <button aria-label="Go to start"><svg><use href="#b1"/></svg></button><button aria-label="Step back frame"><svg><use href="#b2"/></svg></button><button aria-label="Step back key"><svg><use href="#b3"/></svg></button><button aria-label="Play backwards"><svg><use href="#b4"/></svg></button><button aria-label="Play forwards"><svg class="flip"><use href="#b4"/></svg></button><button aria-label="Step forward key"><svg class="flip"><use href="#b3"/></svg></button><button aria-label="Step forward frame"><svg class="flip"><use href="#b2"/></svg></button><button aria-label="Go to end"><svg class="flip"><use href="#b1"/></svg></button>
  </div>
</section>

<section class="range">
  <i class="grip"></i>
  <input aria-label="Animation start" value="1"><input aria-label="Playback start" value="1">
  <div class="track"><div class="thumb"><i></i><span>1</span><span class="fill"></span><span>120</span><i></i></div></div>
  <input aria-label="Playback end" value="120"><input aria-label="Animation end" value="200">
  <button class="tri" aria-label="Anim layers"><svg viewBox="0 0 10 8"><path d="M1 1h8L5 7z" fill="#555" stroke="#aaa"/></svg></button><button class="framed">No Anim Layer</button>
  <button class="tri" aria-label="Character sets"><svg viewBox="0 0 10 8"><path d="M1 1h8L5 7z" fill="#555" stroke="#aaa"/></svg></button><button class="framed">No Character Set</button>
  <button class="ic" aria-label="Auto key"><svg><use href="#key"/></svg></button><button class="ic" aria-label="Preferences"><svg><use href="#run"/></svg></button>
</section>

<section class="command">
  <i class="grip"></i>
  <label for="mel">MEL</label><input id="mel"><output></output>
  <button class="ic" aria-label="Script editor"><svg><use href="#exp"/></svg></button>
</section>

<footer class="help"><i class="grip"></i><span>Select Tool: select an object</span></footer>
<script src="wireframe.js"></script>
</body>
</html>
```
FILE: styles.css
```css
* { box-sizing: border-box; }
html, body { height: 100%; }
body {
  margin: 0; display: flex; flex-direction: column; overflow: hidden;
  background: #444; color: #c4c4c4;
  font: 11px/16px "Noto Sans", "Open Sans", sans-serif;
}
button, input, select { font: inherit; color: inherit; border: 0; padding: 0; margin: 0; background: none; }
button { display: flex; align-items: center; justify-content: center; white-space: nowrap; }
input { background: #2b2b2b; border-radius: 2px; min-width: 0; padding: 0 5px 2px; }
h1, h2, ol { margin: 0; padding: 0; font-size: inherit; font-weight: normal; }
.sprite { position: absolute; width: 0; height: 0; }
.fill { flex: 1; }
.on { background: #5285a6; border-radius: 2px; }

/* icon paint */
.l { fill: #bfbfbf; }
.o { fill: none; stroke: #bfbfbf; }
.oo { fill: #444; stroke: #bfbfbf; }
.d { fill: none; stroke: #333; }
.t { fill: none; stroke: #49a9b9; }
.g { fill: #dd9552; }
.go { stroke: #dd9552; fill: none; }
.c { fill: none; stroke: #444; }
.u { fill: #5fae88; }
.w { fill: none; stroke: #fff; }
.ipr { font-size: 8px; font-weight: bold; fill: #333; }
.onlabel { font-size: 7px; font-weight: bold; fill: #1d3a44; }

.grip { width: 5px; height: 24px; margin: 0 6px; flex: none; background: radial-gradient(circle, #888 1px, transparent 1px) 0 0 / 3px 4px; }
.hgrip { height: 6px; background: radial-gradient(circle, #777 1px, transparent 1px) 0 0 / 4px 3px; }
.bar { width: 21px; height: 18px; flex: none; background: linear-gradient(#888, #888) center / 3px 14px no-repeat, linear-gradient(#777, #777) center / 1px 18px no-repeat; }

.titlebar { height: 23px; flex: none; display: flex; align-items: center; background: #da3b01; color: #fff; padding-left: 2px; }
.titlebar h1 { flex: 1; margin-left: 5px; }
.appicon { width: 16px; height: 16px; }
.titlebar button { width: 46px; height: 20px; }
.titlebar button:last-child { margin-right: 2px; }
.titlebar button svg { width: 11px; height: 11px; }

.menus { display: flex; gap: 15px; }
.mainmenu { height: 20px; flex: none; padding-left: 9px; }

.statusline { height: 24px; flex: none; display: flex; align-items: center; padding-right: 2px; }
.statusline button { width: 23px; height: 22px; flex: none; }
.statusline svg { width: 22px; height: 22px; }
.statusline label { display: flex; align-items: center; gap: 3px; margin-right: 1px; }
.statusline label input { width: 38px; height: 20px; }
.statusline .inputmode { margin: 0 7px; }
.statusline .live { width: 98px; height: 21px; margin-left: 4px; }
.framed { border: 1px solid #535353; border-radius: 2px; }
.drop { position: relative; display: flex; color: #eee; }
.drop select { appearance: none; background: linear-gradient(#444, #444) right 19px top / 1px 100% no-repeat #5d5d5d; width: 100%; padding: 0 4px; border-radius: 2px; }
.drop::after { content: ""; position: absolute; right: 5px; top: 50%; margin-top: -2px; border: 5px solid transparent; border-top-color: #c4c4c4; border-bottom: 0; pointer-events: none; }
.mode { width: 98px; height: 20px; margin: 0 1px; }

.shelf { height: 73px; flex: none; display: flex; padding: 6px 3px 2px 0; border-bottom: 1px solid #2b2b2b; }
.shelf .grip { height: 62px; }
.shelfctl { width: 20px; margin: 0 3px 0 1px; background: #333; display: flex; flex-direction: column; justify-content: space-around; align-items: center; }
.shelfctl svg { width: 11px; height: 11px; }
.shelfmain { flex: 1; display: flex; flex-direction: column; }
.tabs { display: flex; gap: 1px; color: #999; }
.tabs button { height: 21px; padding: 0 12px 0 11px; background: #373737; border-radius: 2px 2px 0 0; }
.tabs .cur { background: #6a6a6a; color: #eee; }
.tools { flex: 1; display: flex; align-items: center; border: 1px solid #2b2b2b; padding: 0 4px 0 3px; }
.tools button { width: 35px; height: 30px; }
.tools button svg { width: 26px; height: 26px; }
.sep { width: 12px; height: 34px; background: linear-gradient(#999, #999) center / 2px 100% no-repeat; }
.shelfscroll { width: 12px; height: 34px; }

.work { flex: 1; min-height: 0; display: flex; border-bottom: 1px solid #2b2b2b; }
.toolbox { width: 44px; flex: none; border-right: 1px solid #2b2b2b; padding: 7px 3px 5px 4px; display: flex; flex-direction: column; }
.toolbox .hgrip { margin-bottom: 4px; flex: none; }
.toolbox > button { height: 36px; margin-bottom: 1px; flex: none; }
.toolbox > button svg { width: 36px; height: 36px; }
.layouts { border-top: 2px solid #999; margin-top: 41px; padding-top: 8px; display: flex; flex-direction: column; align-items: center; gap: 7px; }
.layouts button, .layouts svg { width: 30px; height: 30px; }
.layouts .more { border: 1px solid #2b2b2b; margin: -2px 2px 0 0; }
.logo { width: 32px; height: 30px; margin: auto 0 0 2px; flex: none; }

.panel { flex: 1; min-width: 0; display: flex; flex-direction: column; border: 1px solid #777; margin: 2px 1px 1px 1px; }
.panelmenu { height: 19px; flex: none; padding: 0 0 2px 8px; gap: 16px; }
.panelbar { height: 20px; flex: none; display: flex; align-items: center; padding-bottom: 2px; }
.panelbar .bar { width: 11px; }
.panelbar button { width: 20px; height: 18px; flex: none; }
.panelbar button svg { width: 17px; height: 17px; }
.panelbar input { width: 38px; height: 15px; margin: 0 3px 0 1px; }
.panelbar .cm { margin-right: 2px; }
.gamma { width: 138px; height: 17px; }
.view { flex: 1; min-height: 0; position: relative; background: linear-gradient(#8a9fb6 0, #75879a 25%, #5b6976 57%, #515e6a 68%, #3d474f 80%, #2f373e 90%, #22252b 95%, #0e0e0f 100%); }
#scene { display: block; width: 100%; height: 100%; }
.camera { position: absolute; left: 0; right: 0; bottom: 4px; padding-right: 14px; text-align: center; color: #fff; font-weight: bold; font-size: 10px; }
.mesh { fill: none; stroke: #000068; shape-rendering: crispEdges; }
.grid { fill: none; stroke: #504f4c; shape-rendering: crispEdges; }
.axis { font-weight: bold; font-size: 9px; }

.side { width: 435px; flex: none; border-left: 1px solid #2b2b2b; padding: 0 2px 2px 7px; display: flex; flex-direction: column; }
.sidehead { display: flex; align-items: center; height: 22px; gap: 2px; flex: none; }
.sidehead .hgrip { flex: 1; }
.sidehead h2 { font-size: 9px; margin: 0 18px; }
.sidehead button { width: 13px; height: 13px; background: #333; border: 1px solid #222; border-radius: 3px; }
.sidehead button svg { width: 9px; height: 9px; }
.manips { display: flex; justify-content: flex-end; padding-right: 1px; }
.manips svg { width: 60px; height: 17px; }
.chmenu { height: 24px; padding: 5px 0 0 8px; flex: none; align-items: flex-start; }
.channels { flex: 1; background: #2b2b2b; margin: 0 2px 0 1px; min-height: 80px; }
.layertabs { border-top: 1px solid #2b2b2b; margin-top: 2px; padding-top: 10px; flex: none; }
.layers { height: 190px; flex: none; border: 1px solid #2b2b2b; padding: 3px; display: flex; flex-direction: column; }
.layers .menus { padding-left: 6px; }
.layertools { display: flex; justify-content: flex-end; gap: 3px; padding: 5px 3px 5px 0; }
.layertools svg { width: 20px; height: 16px; }
.layertools .gap { margin-left: 4px; }
.layerlist { flex: 1; background: #2b2b2b; padding: 4px; margin-top: 1px; }
.layer { display: flex; align-items: center; gap: 3px; color: #eee; }
.layer button { width: 20px; height: 15px; border: 1px solid #1d1d1d; border-radius: 2px; }
.layer svg { width: 17px; height: 15px; }
.vtabs { width: 21px; flex: none; display: flex; flex-direction: column; }
.vtabs button { writing-mode: vertical-rl; width: 21px; background: #373737; color: #999; justify-content: flex-start; padding: 12px 2px 12px 0; height: 103px; }
.vtabs .cur { background: #6a6a6a; color: #eee; height: 159px; }

.time { height: 34px; margin-top: 2px; flex: none; display: flex; padding-right: 10px; }
.ruler { flex: 1; height: 28px; background: #2b2b2b; margin: 2px 7px 0 0; display: flex; padding-left: 9px; }
.now { width: 12px; flex: none; background: #535353; color: #fff; padding: 11px 0 0 1px; font-weight: normal; margin-right: 41px; }
.ruler ol { flex: 1; display: flex; list-style: none; color: #777; }
.ruler li { flex: 1 1 0; width: 0; line-height: 10px; padding-left: 2px; background: linear-gradient(#888, #888) 0 13px / 2px 16px no-repeat; }
.ruler li:last-child { flex: 0 0 21px; }
.time input { width: 68px; height: 18px; margin-top: 8px; }
.play { display: flex; margin: 4px 0 0 6px; height: 22px; }
.play button { width: 23px; }
.play svg { width: 19px; height: 20px; }
.flip { transform: scaleX(-1); }
.time .grip, .range .grip, .command .grip { margin-top: 2px; }

.range { height: 33px; flex: none; display: flex; align-items: center; padding-right: 2px; }
.range > input { width: 68px; height: 23px; margin: 0 7px 0 1px; }
.range > input:last-of-type { margin-right: 0; }
.track { flex: 1; height: 23px; background: #373737; padding: 2px 0 2px 7px; margin-right: 6px; }
.thumb { width: 60%; min-width: 90px; height: 19px; background: #5d5d5d; border-radius: 2px; display: flex; align-items: center; gap: 4px; padding: 0 4px; line-height: 14px; }
.thumb i { width: 13px; height: 13px; background: #919191; border-radius: 2px; }
.range .framed { width: 102px; height: 24px; justify-content: flex-start; padding: 0 0 2px 5px; margin-right: 1px; }
.tri { width: 20px; margin-right: 1px; padding-bottom: 2px; }
.framed + .tri { margin-left: 5px; }
.tri svg { width: 9px; height: 7px; }
.ic { width: 32px; flex: none; }
.ic svg { width: 19px; height: 20px; }

.command { height: 33px; flex: none; display: flex; align-items: center; padding-right: 2px; border-bottom: 1px solid #2b2b2b; }
.command label { width: 46px; padding: 0 0 1px 11px; color: #eee; }
.command input { flex: 0 1 618px; height: 23px; margin-right: 6px; }
.command output { flex: 1; height: 25px; background: #2b2b2b; }
.help { height: 24px; flex: none; display: flex; align-items: center; font-size: 9px; }
.help span { margin-left: 12px; }
.help .grip { height: 14px; }
```
FILE: wireframe.js
```js
// Builds the wireframe of the minigolf course from matched outlines.
(function () {
  var NS = 'http://www.w3.org/2000/svg';
  var d = [];
  function mix(a, b, t) { return [a[0] + (b[0] - a[0]) * t, a[1] + (b[1] - a[1]) * t]; }
  function line(pts) { d.push('M' + pts.map(function (p) { return p[0].toFixed(1) + ' ' + p[1].toFixed(1); }).join('L')); }
  function flush(id, width) {
    var p = document.createElementNS(NS, 'path');
    p.setAttribute('d', d.join(''));
    p.setAttribute('stroke-width', width);
    document.getElementById(id).appendChild(p);
    d = [];
  }

  // [rim point, floor point] around the course, clockwise from the near left corner
  var wall = [
    [[186, 658], [196, 661]], [[189, 652], [198, 658]], [[197, 648], [208, 655]],
    [[279, 622], [281, 637]], [[292, 608], [298, 628]], [[337, 594], [343, 613]],
    [[472, 550], [478, 575]], [[582, 514], [586, 538]], [[690, 480], [694, 503]],
    [[834, 432], [850, 447]], [[834, 432], [858, 424]], [[769, 342], [793, 339]],
    [[769, 325], [791, 335]], [[775, 316], [796, 332]], [[895, 280], [892, 308]],
    [[903, 278], [900, 307]], [[909, 283], [908, 312]], [[987, 377], [985, 399]],
    [[1240, 297], [1237, 319]], [[1250, 294], [1243, 315]], [[1256, 297], [1247, 317]],
    [[1346, 378], [1320, 383]], [[1350, 389], [1326, 387]], [[1348, 402], [1326, 389]],
    [[1341, 411], [1322, 390]], [[1171, 473], [1171, 443]], [[1062, 512], [1062, 482]],
    [[895, 573], [896, 543]], [[810, 604], [810, 573]], [[647, 662], [645, 634]],
    [[532, 705], [523, 677]], [[388, 757], [380, 728]], [[341, 774], [337, 743]],
    [[327, 780], [321, 757]], [[250, 808], [240, 786]], [[232, 815], [231, 790]],
    [[222, 812], [226, 792]], [[219, 805], [222, 788]]
  ];
  [0, 0.06, 0.13, 0.3, 0.45, 0.6, 0.75, 0.82, 0.94, 1].forEach(function (t) {
    var pts = wall.map(function (w) { return mix(w[0], w[1], t); });
    pts.push(pts[0]);
    line(pts);
  });
  for (var i = 0; i < wall.length; i++) {
    line(wall[i]);
    var a = wall[i], b = wall[(i + 1) % wall.length];
    var len = Math.hypot(a[0][0] - b[0][0], a[0][1] - b[0][1]);
    var n = (i > 9 && i < 17) || i === 21 ? Math.floor(len / 20) : 0;
    for (var k = 1; k < n; k++) line([mix(a[0], b[0], k / n), mix(a[1], b[1], k / n)]);
  }
  // ribs on the lane walls, by x along the edge
  [925, 934, 958, 985, 1003, 1020, 1045, 1069, 1078, 1089, 1133, 1191, 1250, 1297].forEach(function (x) {
    var y = 388 + (1326 - x) * 0.359;
    line([[x + 2, y], [x, y + 16], [x - 5, y + 30]]);
  });
  [1000, 1007, 1037, 1046, 1095, 1101, 1150, 1158, 1190, 1204].forEach(function (x) {
    var y = 377 - (x - 987) * 0.318;
    line([[x, y], [x - 2, y + 10], [x, y + 22]]);
  });
  // inner side of the far right and alcove walls
  [3, 6, 11].forEach(function (o) {
    line([[1243 - o, 300 + o / 2], [1243 + o, 313 - o], [1322 + o, 381 - o], [1343 - o, 382]]);
    line([[904 - o, 284 + o], [908 + o, 310 - o], [985 + o, 392 - o / 2]]);
    line([[772 + o, 345], [836 + o, 432]]);
    line([[776, 318 + o], [900, 280 + o]]);
  });
  for (k = 1; k < 8; k++) line([mix([1252, 294], [1347, 380], k / 8), mix([1246, 318], [1322, 386], (k + 0.6) / 8)]);

  // lines running the length of the course
  var near = [[200, 659], [231, 789]], step = [[298, 627], [335, 744]];
  var mid = [[694, 503], [750, 595]], cross = [[846, 449], [913, 537]];
  var right = [[985, 401], [1062, 482]], end = [[1240, 318], [1324, 388]];
  [0, 0.13, 0.2, 0.34, 0.435, 0.51, 0.59, 0.66, 0.755, 0.89].forEach(function (t) {
    line([near, step, mid, cross, right, end].map(function (s) { return mix(s[0], s[1], t); }));
  });
  [0.27, 0.8, 0.95].forEach(function (t) {
    line([mix(cross[0], cross[1], t), mix(right[0], right[1], t), mix(end[0], end[1], t)]);
  });

  // lines across the floor: ends, then the count of close copies
  [[213, 653, 250, 806, 2], [203, 660, 232, 790, 2], [270, 637, 312, 784, 2], [284, 632, 326, 772, 1],
   [297, 610, 341, 775, 2], [337, 594, 388, 757, 1], [472, 551, 523, 678, 1], [476, 570, 532, 705, 1],
   [582, 514, 586, 538, 2], [585, 538, 637, 637, 2], [637, 637, 647, 662, 1], [692, 501, 750, 595, 2],
   [750, 595, 760, 623, 1], [816, 458, 875, 548, 2],
   [844, 452, 905, 548, 2], [857, 450, 914, 537, 2],
   [997, 397, 1067, 480, 3], [1042, 383, 1107, 465, 2], [1097, 365, 1171, 442, 2],
   [1152, 348, 1226, 422, 2], [1193, 332, 1266, 410, 2], [1222, 324, 1302, 397, 1]
  ].forEach(function (s) {
    for (var j = 0; j < s[4]; j++) line([[s[0] + j * 4, s[1] - j], [s[2] + j * 4, s[3] - j]]);
  });
  line([[243, 650], [232, 667], [262, 788], [282, 796]]);
  line([[243, 650], [252, 666], [280, 775], [283, 796]]);

  // alcove floor and its continuation across the lane
  var top = [[796, 333], [900, 306]], waist = [[858, 424], [985, 399]], base = [[913, 537], [1062, 482]];
  [0.06, 0.17, 0.27, 0.38, 0.46, 0.5, 0.6, 0.7, 0.78, 0.86, 0.94].forEach(function (t) {
    line([top, waist, base].map(function (s) { return mix(s[0], s[1], t); }));
  });
  [0.08, 0.18, 0.3, 0.38, 0.47, 0.58, 0.68, 0.78, 0.87].forEach(function (t) {
    line([mix(top[0], waist[0], t), mix(top[1], waist[1], t)]);
  });

  // cup
  [[12, 9], [10, 7], [6, 5]].forEach(function (r) {
    d.push('M' + (857 - r[0]) + ' 335a' + r[0] + ' ' + r[1] + ' 0 1 0 ' + r[0] * 2 + ' 0a' + r[0] + ' ' + r[1] + ' 0 1 0 -' + r[0] * 2 + ' 0');
  });
  // arch at the alcove mouth
  [0, 2, 4, 6].forEach(function (o) {
    d.push('M' + (855 + o) + ' ' + (424 + o) + 'q14 -16 33 -17q11 0 10 13l-5 3');
  });
  for (i = 0; i < 5; i++) {
    line([[853 + i * 2, 420], [858 + i * 2, 436]]);
    line([[888 + i * 2, 407 + i], [890 + i * 2, 424 - i]]);
  }
  d.push('M850 418q18 -24 90 -26M866 455q-4 -18 12 -15M876 438q16 4 14 12M975 421q0 -14 14 -11l8 3');

  // wedge obstacles
  function fan(apex, from, to, n) {
    for (var j = 0; j <= n; j++) line([apex, mix(from, to, j / n)]);
    for (j = 1; j < 7; j++) line([mix(apex, from, j / 6), mix(apex, to, j / 6)]);
  }
  fan([957, 361], [944, 393], [977, 400], 9);
  fan([957, 361], [977, 382], [977, 400], 6);
  fan([979, 479], [965, 519], [1019, 501], 7);
  fan([979, 479], [1019, 490], [1019, 501], 3);
  flush('mesh', 1);

  // heavy edges where many seams overlap
  line([[1324, 389], [1171, 443], [810, 573], [523, 677], [380, 728], [337, 743], [321, 757], [231, 790]]);
  line([[793, 339], [858, 424]]);
  line([[985, 399], [1237, 319]]);
  line([[965, 519], [979, 479]]);
  line([[965, 517], [1019, 499]]);
  line([[853, 422], [861, 436]]);
  line([[796, 333], [892, 308]]);
  line([[292, 608], [472, 551], [690, 481], [832, 433]]);
  flush('mesh', 2);

  // ground grid
  var g = [[734, 457], [786, 440], [810, 477], [757, 495]];
  for (i = 0; i <= 24; i++) {
    line([mix(g[0], g[1], i / 24), mix(g[3], g[2], i / 24)]);
    line([mix(g[0], g[3], i / 24), mix(g[1], g[2], i / 24)]);
  }
  flush('grid', 1);
})();
```
